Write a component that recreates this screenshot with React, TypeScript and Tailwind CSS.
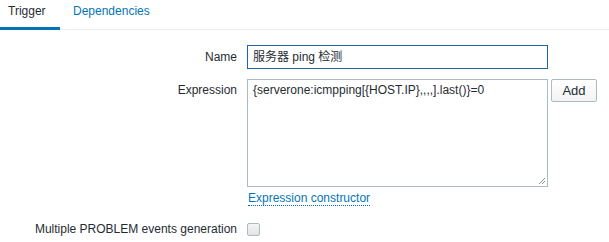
const FONT = "font-['Liberation_Sans','Noto_Sans_CJK_SC',Arial,sans-serif]";

function Row({ label, top, children }: { label: string; top?: boolean; children: React.ReactNode }) {
  return (
    <div className={`flex ${top ? "items-start" : "items-center"}`}>
      <div className={`w-[237px] shrink-0 text-right text-[12px] leading-[14px] text-[#1f2c33] ${top ? "pt-[4px]" : ""}`}>{label}</div>
      <div className="ml-[10px] flex items-start">{children}</div>
    </div>
  );
}

export default function App() {
  return (
    <div className={`${FONT} w-[609px] h-[242px] bg-white overflow-hidden`}>
      <div className="flex h-[30px] border-b border-[#ebeeef]">
        <div className="-mb-px h-[30px] w-[60px] pl-2 pt-[4px] text-[12px] leading-[14px] text-[#1f2c33] border-b-[3px] border-[#0275b8]">
          Trigger
        </div>
        <div className="h-[30px] pl-[13px] pt-[4px] text-[12px] leading-[14px] text-[#0275b8]">Dependencies</div>
      </div>

      <div className="pt-[15px] flex flex-col">
        <Row label="Name">
          <div className="w-[301px] h-[24px] border border-[#1f65a6] px-[5px] flex items-center text-[12px] text-[#1f2c33]">
            服务器 ping 检测
          </div>
        </Row>

        <div className="mt-[10px]">
          <Row label="Expression" top>
            <div className="relative w-[301px] h-[108px] border border-[#acbbc2] px-[5px] pt-[3px] text-[12px] leading-[14px] text-[#1f2c33]">
              {"{serverone:icmpping[{HOST.IP},,,,].last()}=0"}
              <svg className="absolute right-[1px] bottom-[1px]" width="8" height="8" viewBox="0 0 8 8">
                <path d="M7 1 L1 7 M7 4 L4 7" stroke="#8a8a8a" strokeWidth="1" />
              </svg>
            </div>
            <button className="ml-[3px] w-[46px] h-[23px] rounded-[2px] border border-[#acbbc2] bg-gradient-to-b from-white to-[#f3f3f3] text-[13px] text-[#1f2c33]">
              Add
            </button>
          </Row>
        </div>

        <div className="ml-[248px] mt-[4px] text-[12px] leading-[14px]">
          <span className="text-[#0275b8] border-b border-dotted border-[#0275b8]">
            Expression constructor
          </span>
        </div>

        <div className="mt-[17px] h-[13px]">
          <Row label="Multiple PROBLEM events generation">
            <div className="w-[13px] h-[13px] rounded-[2px] border border-[#acbbc2] bg-gradient-to-b from-[#f5f5f5] to-[#e3e3e3]" />
          </Row>
        </div>
      </div>
    </div>
  );
}
